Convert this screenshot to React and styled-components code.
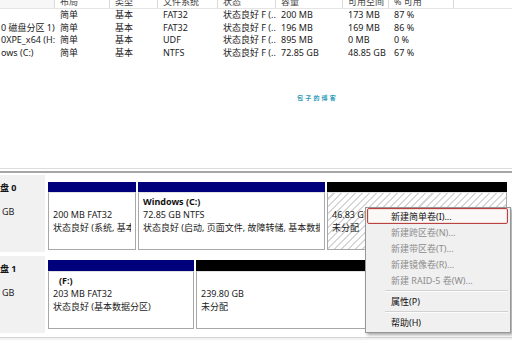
import React from 'react';
import styled, { createGlobalStyle } from 'styled-components';

const GlobalStyle = createGlobalStyle`
  html, body {
    margin: 0;
    padding: 0;
    background: #fff;
  }
  body {
    font-family: "Noto Sans", "Noto Sans CJK SC", sans-serif;
  }
`;

const Screen = styled.div`
  position: relative;
  width: 512px;
  height: 340px;
  overflow: hidden;
  background: #fff;
  display: flex;
  flex-direction: column;
  font-size: 9px;
  color: #222;
`;

/* ---------- volume list ---------- */

const COLUMNS = '55px 55px 48px 60px 58px 67px 46px 65px 1fr';

const ListView = styled.div`
  position: relative;
  height: 168px;
  flex-shrink: 0;
  display: flex;
  flex-direction: column;
`;

const HeaderRow = styled.div`
  display: grid;
  grid-template-columns: ${COLUMNS};
  height: 8px;
  border-bottom: 1px solid #e4e4e4;
`;

const HeaderCell = styled.div`
  line-height: 3px;
  padding-left: 5px;
  color: #444;
  overflow: hidden;
  white-space: nowrap;
  border-right: ${p => (p.last ? 'none' : '1px solid #d9d9d9')};
  background: ${p => (p.first ? '#f7f7f7' : '#fff')};
`;

const Row = styled.div`
  display: grid;
  grid-template-columns: ${COLUMNS};
  height: 12.5px;
  line-height: 12.5px;
`;

const Cell = styled.div`
  padding-left: ${p => (p.first ? '1px' : '5px')};
  overflow: hidden;
  white-space: nowrap;
`;

const Watermark = styled.div`
  position: absolute;
  left: 297px;
  top: 93px;
  font-size: 6px;
  letter-spacing: 2.2px;
  color: #2b9bb8;
  font-weight: 600;
`;

const Splitter = styled.div`
  height: 2px;
  flex-shrink: 0;
  border-top: 1px solid #dcdcdc;
  border-bottom: 2px solid #a6a6a6;
`;

/* ---------- graphical disk view ---------- */

const GraphView = styled.div`
  flex: 1;
  display: flex;
  flex-direction: column;
  gap: 4px;
  padding-top: 2px;
  background: #fff;
`;

const DiskRow = styled.div`
  display: flex;
  gap: 3px;
  height: 77px;
`;

const DiskLabel = styled.div`
  width: 45px;
  flex-shrink: 0;
  background: #f1f1f1;
  padding-top: 7px;
  box-sizing: border-box;
  line-height: 12px;
  overflow: hidden;
  white-space: nowrap;
`;

const DiskName = styled.div`
  font-weight: 700;
  color: #111;
`;

const DiskSize = styled.div`
  margin-top: 12px;
  padding-left: 2px;
`;

const Partitions = styled.div`
  display: flex;
  gap: 2px;
  padding-top: ${p => p.offset}px;
`;

const Partition = styled.div`
  width: ${p => p.width}px;
  display: flex;
  flex-direction: column;
`;

const Bar = styled.div`
  height: ${p => p.h}px;
  background: ${p => (p.free ? '#000' : '#00007c')};
`;

const Body = styled.div`
  height: 58px;
  box-sizing: border-box;
  border: 1px solid #a8a8a8;
  border-top: 1px solid #e2e2e2;
  padding: 2px 4px;
  line-height: 13px;
  overflow: hidden;
  white-space: nowrap;
  background: ${p =>
    p.hatch
      ? 'repeating-linear-gradient(135deg, #fff 0 3.5px, #d6d6d6 3.5px 5px)'
      : '#fff'};
`;

const PartLine = styled.div`
  overflow: hidden;
  font-weight: ${p => (p.bold ? 700 : 400)};
  padding-left: ${p => p.indent || 0}px;
  color: ${p => (p.bold ? '#111' : '#222')};
`;

const StatusStrip = styled.div`
  height: 6px;
  border-top: 1px solid #d4d4d4;
  background: #f2f2f2;
`;

/* ---------- context menu ---------- */

const Menu = styled.div`
  position: absolute;
  left: 365px;
  top: 207px;
  width: 146px;
  box-sizing: border-box;
  background: #f0f0f0;
  border: 1px solid #979797;
  box-shadow: 2px 2px 3px rgba(0, 0, 0, 0.35);
  padding: 0 2px 2px 1px;
`;

const MenuItem = styled.div`
  height: 16px;
  line-height: 16px;
  box-sizing: border-box;
  padding-left: 23px;
  white-space: nowrap;
  color: ${p => (p.disabled ? '#8c8c8c' : '#111')};
  border: 1px solid ${p => (p.active ? '#b9443f' : 'transparent')};
  border-radius: 2px;
  background: ${p => (p.active ? '#fbf8f8' : 'transparent')};
  box-shadow: ${p => (p.active ? 'inset 0 0 0 1px #f3dede' : 'none')};
`;

const Separator = styled.div`
  height: 5px;
  display: flex;
  align-items: center;
  padding-left: 18px;

  &::after {
    content: '';
    flex: 1;
    height: 1px;
    background: #d2d2d2;
    border-bottom: 1px solid #fbfbfb;
  }
`;

const headers = ['', '布局', '类型', '文件系统', '状态', '容量', '可用空间', '% 可用', ''];

const volumes = [
  ['', '简单', '基本', 'FAT32', '状态良好 F (...', '200 MB', '173 MB', '87 %'],
  ['0 磁盘分区 1)', '简单', '基本', 'FAT32', '状态良好 F (...', '196 MB', '169 MB', '86 %'],
  ['0XPE_x64 (H:)', '简单', '基本', 'UDF', '状态良好 F (...', '895 MB', '0 MB', '0 %'],
  ['ows (C:)', '简单', '基本', 'NTFS', '状态良好 F (...', '72.85 GB', '48.85 GB', '67 %'],
];

const disks = [
  {
    name: '盘 0',
    size: 'GB',
    offset: 7,
    bar: 10,
    parts: [
      { width: 88, lines: ['', '200 MB FAT32', '状态良好 (系统, 基本数据分区)'] },
      { width: 187, lines: ['Windows (C:)', '72.85 GB NTFS', '状态良好 (启动, 页面文件, 故障转储, 基本数据分区)'] },
      { width: 180, free: true, hatch: true, lines: ['', '46.83 GB', '未分配'] },
    ],
  },
  {
    name: '盘 1',
    size: 'GB',
    offset: 4,
    bar: 11,
    parts: [
      { width: 146, indent: 6, lines: ['(F:)', '203 MB FAT32', '状态良好 (基本数据分区)'] },
      { width: 309, free: true, lines: ['', '239.80 GB', '未分配'] },
    ],
  },
];

const menu = [
  { label: '新建简单卷(I)...', active: true },
  { label: '新建跨区卷(N)...', disabled: true },
  { label: '新建带区卷(T)...', disabled: true },
  { label: '新建镜像卷(R)...', disabled: true },
  { label: '新建 RAID-5 卷(W)...', disabled: true },
  { sep: true },
  { label: '属性(P)' },
  { sep: true },
  { label: '帮助(H)' },
];

export default function App() {
  return (
    <Screen>
      <GlobalStyle />
      <ListView>
        <HeaderRow>
          {headers.map((h, i) => (
            <HeaderCell key={i} first={i === 0} last={i === headers.length - 1}>
              {h}
            </HeaderCell>
          ))}
        </HeaderRow>
        {volumes.map((row, r) => (
          <Row key={r}>
            {row.map((c, i) => (
              <Cell key={i} first={i === 0}>
                {c}
              </Cell>
            ))}
            <Cell />
          </Row>
        ))}
        <Watermark>包子的博客</Watermark>
      </ListView>
      <Splitter />
      <GraphView>
        {disks.map(disk => (
          <DiskRow key={disk.name}>
            <DiskLabel>
              <DiskName>{disk.name}</DiskName>
              <DiskSize>{disk.size}</DiskSize>
            </DiskLabel>
            <Partitions offset={disk.offset}>
              {disk.parts.map((p, i) => (
                <Partition key={i} width={p.width}>
                  <Bar h={disk.bar} free={p.free} />
                  <Body hatch={p.hatch}>
                    <PartLine bold indent={p.indent}>
                      {p.lines[0] || '\u00a0'}
                    </PartLine>
                    <PartLine>{p.lines[1]}</PartLine>
                    <PartLine>{p.lines[2]}</PartLine>
                  </Body>
                </Partition>
              ))}
            </Partitions>
          </DiskRow>
        ))}
        <StatusStrip />
      </GraphView>
      <Menu>
        {menu.map((m, i) =>
          m.sep ? (
            <Separator key={i} />
          ) : (
            <MenuItem key={i} active={m.active} disabled={m.disabled}>
              {m.label}
            </MenuItem>
          )
        )}
      </Menu>
    </Screen>
  );
}
